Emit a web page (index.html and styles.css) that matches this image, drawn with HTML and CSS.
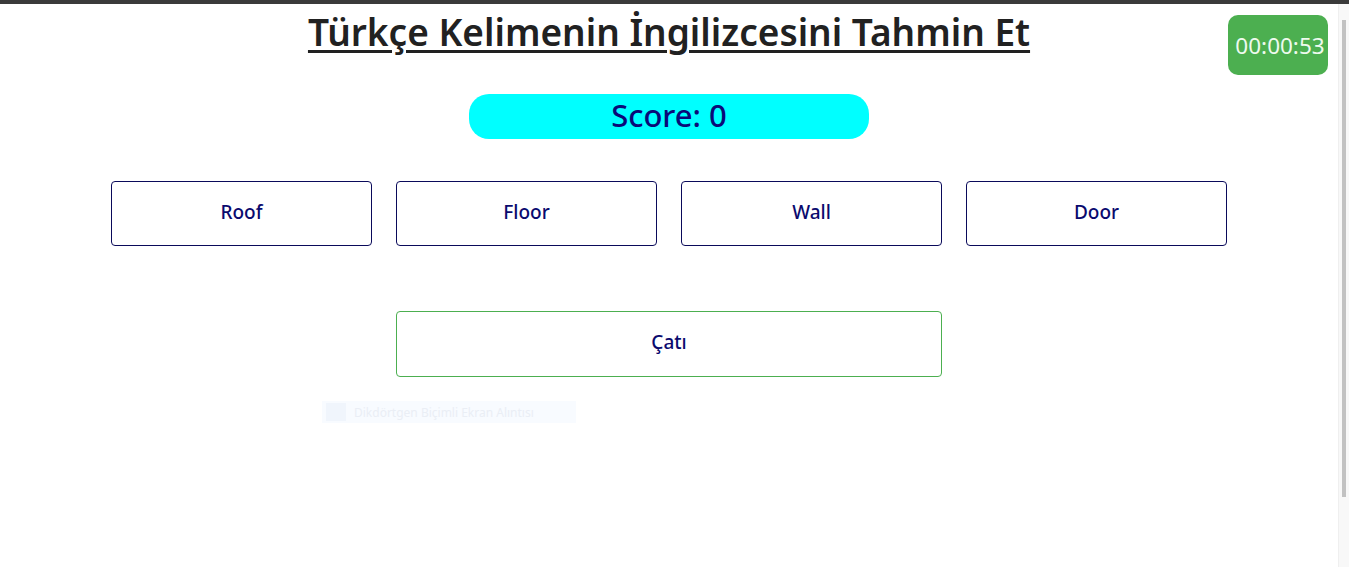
FILE: index.html
```html
<!DOCTYPE html>
<html lang="tr">
<head>
<meta charset="utf-8">
<title>Kelime Oyunu</title>
<link rel="stylesheet" href="styles.css">
</head>
<body>
<div class="topbar"></div>
<div class="frame">
  <main class="page">
    <h1 class="title">Türkçe Kelimenin İngilizcesini Tahmin Et</h1>
    <div class="timer">00:00:53</div>
    <div class="score">Score: 0</div>
    <div class="grid">
      <button class="opt">Roof</button>
      <button class="opt">Floor</button>
      <button class="opt">Wall</button>
      <button class="opt">Door</button>
      <div class="answer">Çatı</div>
    </div>
    <div class="ghost-row">
      <div class="ghost"><span class="ghost-icon"></span><span class="ghost-text">Dikdörtgen Biçimli Ekran Alıntısı</span></div>
    </div>
  </main>
  <div class="scrollbar"><div class="thumb"></div></div>
</div>
</body>
</html>
```

FILE: styles.css
```css
* { box-sizing: border-box; }
html, body { margin: 0; padding: 0; height: 100%; background: #fff; overflow: hidden; }
body { font-family: "Noto Sans", "Open Sans", sans-serif; display: flex; flex-direction: column; }
.topbar { height: 4px; background: #3a3a3a; flex: none; }
.frame { flex: 1; display: flex; }
.page { flex: 1; position: relative; display: flex; flex-direction: column; align-items: center; }
.title {
  margin: 5px 0 0;
  font-size: 37px;
  font-weight: 600;
  color: #212121;
  text-decoration: underline;
  text-decoration-thickness: 3px;
  text-underline-offset: 4px;
  line-height: 46px;
}
.timer {
  position: absolute;
  top: 11px;
  right: 10px;
  width: 100px;
  height: 60px;
  background: #4caf50;
  color: #eefaee;
  border-radius: 10px;
  display: flex;
  align-items: center;
  justify-content: center;
  padding-left: 4px;
  font-size: 22.5px;
}
.score {
  margin-top: 39px;
  width: 400px;
  height: 45px;
  background: #00ffff;
  border-radius: 20px;
  color: #0a0a78;
  font-size: 31px;
  font-weight: 500;
  display: flex;
  align-items: center;
  justify-content: center;
  padding-bottom: 3px;
}
.grid {
  margin-top: 42px;
  display: grid;
  grid-template-columns: repeat(4, 261px);
  grid-auto-rows: 65px;
  column-gap: 24px;
  row-gap: 65px;
}
.opt {
  font-family: inherit;
  background: #fff;
  border: 1px solid #0a0a5a;
  border-radius: 4px;
  color: #0a0a6e;
  font-size: 19px;
  font-weight: 500;
  padding: 0 0 4px;
}
.answer {
  grid-column: 2 / 4;
  height: 66px;
  border: 1px solid #4caf50;
  border-radius: 4px;
  color: #0a0a6e;
  font-size: 19px;
  font-weight: 500;
  display: flex;
  align-items: center;
  justify-content: center;
  padding-bottom: 4px;
}
.ghost-row { width: 1116px; margin-top: 25px; padding-left: 211px; }
.ghost {
  width: 254px;
  height: 22px;
  background: #f8fbff;
  display: flex;
  align-items: center;
  gap: 8px;
  padding-left: 4px;
}
.ghost-icon { width: 20px; height: 18px; background: #f0f5fc; }
.ghost-text { color: #eaeef5; font-size: 12px; }
.scrollbar { width: 11px; flex: none; background: #f8f8f8; border-left: 1px solid #efefef; padding: 16px 2px 70px 3px; }
.thumb { height: 100%; width: 4px; background: #c2c2c2; }
```
